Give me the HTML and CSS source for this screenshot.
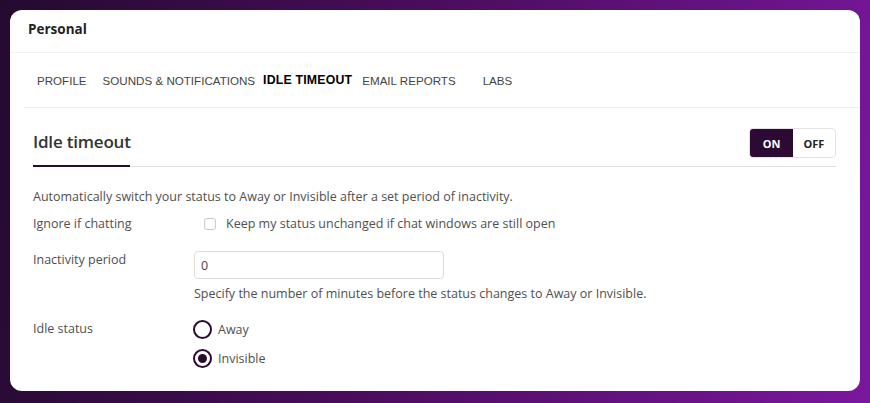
FILE: index.html
```html
<!DOCTYPE html>
<html>
<head>
<meta charset="utf-8">
<link rel="stylesheet" href="styles.css">
</head>
<body>
<div class="card">
  <div class="header">Personal</div>
  <div class="tabs">
    <span class="tab tab-profile">PROFILE</span>
    <span class="tab tab-sounds">SOUNDS &amp; NOTIFICATIONS</span>
    <span class="tab tab-active">IDLE TIMEOUT</span>
    <span class="tab tab-email">EMAIL REPORTS</span>
    <span class="tab">LABS</span>
  </div>
  <div class="content">
    <div class="title-row">
      <h2 class="title">Idle timeout</h2>
      <div class="toggle">
        <span class="toggle-on">ON</span>
        <span class="toggle-off">OFF</span>
      </div>
    </div>
    <p class="desc">Automatically switch your status to Away or Invisible after a set period of inactivity.</p>
    <div class="row row-check">
      <div class="label">Ignore if chatting</div>
      <div class="field check-field">
        <span class="checkbox"></span>
        <span>Keep my status unchanged if chat windows are still open</span>
      </div>
    </div>
    <div class="row row-input">
      <div class="label">Inactivity period</div>
      <div class="field">
        <div class="input">0</div>
        <div class="help">Specify the number of minutes before the status changes to Away or Invisible.</div>
      </div>
    </div>
    <div class="row row-radio">
      <div class="label">Idle status</div>
      <div class="field radios">
        <div class="radio-item"><span class="radio"></span><span>Away</span></div>
        <div class="radio-item"><span class="radio checked"></span><span>Invisible</span></div>
      </div>
    </div>
  </div>
</div>
</body>
</html>
```

FILE: styles.css
```css
* { box-sizing: border-box; }
html, body { margin: 0; padding: 0; }
body {
  width: 870px;
  height: 403px;
  overflow: hidden;
  background: linear-gradient(100deg, #240a30 0%, #4a0c5c 45%, #7a179e 100%);
  padding: 10px;
  font-family: "Open Sans", "DejaVu Sans", sans-serif;
}
.card {
  background: #ffffff;
  border-radius: 12px;
  width: 850px;
  height: 381px;
  overflow: hidden;
}
.header {
  height: 43px;
  padding: 10px 0 0 18px;
  font-weight: 700;
  font-size: 13.5px;
  color: #1f1f24;
  border-bottom: 1px solid #f1f1f1;
}
.tabs {
  margin-left: 14px;
  height: 55px;
  display: flex;
  align-items: center;
  padding-left: 13px;
  border-bottom: 1px solid #efefef;
  font-family: "Liberation Sans", Arial, sans-serif;
  font-size: 11.6px;
  color: #444;
}
.tab { margin-right: 8px; white-space: nowrap; }
.tab-profile { margin-right: 16px; }
.tab-active { font-weight: 700; color: #000; font-size: 12.3px; letter-spacing: 0.2px; margin-right: 10px; }
.tab-email { margin-right: 27px; }
.content {
  padding: 20px 24px 0 23px;
}
.title-row {
  display: flex;
  justify-content: space-between;
  align-items: flex-start;
  border-bottom: 1px solid #e2e2e2;
  height: 39px;
}
.title {
  margin: 0;
  padding-top: 2px;
  font-size: 17px;
  letter-spacing: -0.2px;
  font-weight: 600;
  color: #333;
  width: 97px;
  height: 39px;
  white-space: nowrap;
  border-bottom: 2px solid #2a0a2e;
}
.toggle {
  display: flex;
  height: 30px;
  border: 1px solid #e3e3e3;
  border-radius: 4px;
  overflow: hidden;
  font-size: 11px;
  font-weight: 700;
}
.toggle-on {
  background: #2d0a34;
  color: #fff;
  width: 43px;
  display: flex;
  align-items: center;
  justify-content: center;
}
.toggle-off {
  color: #222;
  width: 42px;
  display: flex;
  align-items: center;
  justify-content: center;
}
.desc {
  margin: 21px 0 0 0;
  font-size: 12.5px;
  font-weight: 500;
  color: #4f4f4f;
  line-height: 18px;
  white-space: nowrap;
}
.row {
  display: flex;
  font-size: 12.5px;
  font-weight: 500;
  color: #4f4f4f;
  white-space: nowrap;
}
.label { width: 161px; flex: none; }
.row-check { margin-top: 9px; line-height: 18px; }
.check-field { display: flex; align-items: center; }
.checkbox {
  width: 12px;
  height: 12px;
  border: 1px solid #c9c9c9;
  border-radius: 3px;
  margin: 0 10px 0 10px;
}
.row-input { margin-top: 18px; line-height: 18px; }
.input {
  width: 250px;
  height: 28px;
  border: 1px solid #dcdcdc;
  border-radius: 4px;
  padding: 5px 0 0 6px;
  color: #444;
}
.help { margin-top: 6px; }
.row-radio { margin-top: 17px; line-height: 18px; }
.radios { display: flex; flex-direction: column; gap: 10px; }
.radio-item { display: flex; align-items: center; gap: 6px; margin-left: -1px; }
.radio {
  width: 19px;
  height: 19px;
  border: 2px solid #2a0a2e;
  border-radius: 50%;
  display: flex;
  align-items: center;
  justify-content: center;
}
.radio.checked::after {
  content: "";
  width: 9px;
  height: 9px;
  border-radius: 50%;
  background: #2a0a2e;
}
```
